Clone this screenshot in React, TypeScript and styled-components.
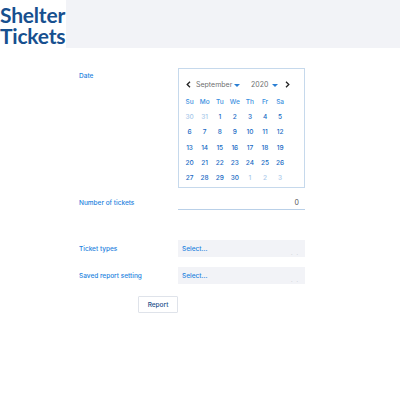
import React from 'react';
import styled, { createGlobalStyle } from 'styled-components';

const GlobalStyle = createGlobalStyle`
  body {
    margin: 0;
    background: #ffffff;
    font-family: 'Inter', 'Noto Sans', sans-serif;
  }
`;

const Page = styled.div`
  width: 400px;
  height: 400px;
  overflow: hidden;
`;

const Header = styled.header`
  display: flex;
  height: 48px;
`;

const Logo = styled.div`
  width: 66px;
  color: #17508f;
  font-family: 'Lato', sans-serif;
  font-weight: 700;
  font-size: 21px;
  line-height: 21px;
  letter-spacing: -0.2px;
  padding-top: 4px;
  white-space: nowrap;
`;

const LogoLine = styled.div`
  height: 21px;
`;

const HeaderBar = styled.div`
  flex: 1;
  background: #f2f3f7;
`;

const Form = styled.form`
  display: flex;
  flex-direction: column;
  padding: 20px 0 0 79px;
`;

const Row = styled.div<{ $gap?: number }>`
  display: grid;
  grid-template-columns: 99px 127px;
  align-items: start;
  margin-top: ${(p) => p.$gap || 0}px;
`;

const Label = styled.label`
  color: #2482de;
  font-size: 6.5px;
  font-weight: 500;
  padding-top: 4px;
`;

const CenterLabel = styled(Label)`
  padding-top: 0;
  align-self: center;
`;

const Calendar = styled.div`
  height: 120px;
  box-sizing: border-box;
  border: 1px solid #c6d9ec;
  padding: 8px 0 0 3px;
`;

const Nav = styled.div`
  display: flex;
  align-items: center;
  height: 14px;
  padding-left: 4px;
  font-size: 7px;
  color: #707070;
`;

const Chevron = styled.span<{ $gap?: number }>`
  display: inline-flex;
  align-items: center;
  margin-left: ${(p) => p.$gap || 0}px;
`;

const Month = styled.span<{ $w: number; $gap: number }>`
  display: inline-flex;
  align-items: center;
  justify-content: space-between;
  width: ${(p) => p.$w}px;
  margin-left: ${(p) => p.$gap}px;
`;

const Caret = styled.span`
  width: 0;
  height: 0;
  border-left: 3px solid transparent;
  border-right: 3px solid transparent;
  border-top: 3px solid #2a7fd4;
  margin-top: 3px;
`;

const Grid = styled.div`
  display: grid;
  grid-template-columns: repeat(7, 15.1px);
  grid-auto-rows: 15.3px;
  margin-top: 3px;
`;

const DayName = styled.div`
  display: flex;
  align-items: center;
  justify-content: center;
  font-size: 6.5px;
  color: #3a8fe0;
  font-weight: 500;
`;

const Day = styled.div<{ $muted?: boolean }>`
  display: flex;
  align-items: center;
  justify-content: center;
  font-size: 6.5px;
  font-weight: 500;
  color: ${(p) => (p.$muted ? '#a9c9ea' : '#176ac4')};
`;

const NumberInput = styled.div`
  height: 13px;
  border-bottom: 1px solid #b9d0e8;
  display: flex;
  align-items: center;
  justify-content: flex-end;
  padding-right: 6px;
  font-size: 7px;
  color: #555;
`;

const Select = styled.div`
  position: relative;
  height: 17px;
  background: #f2f3f7;
  display: flex;
  align-items: center;
  padding-left: 4px;
  font-size: 6.5px;
  color: #2482de;
  font-weight: 500;
`;

const Dots = styled.span`
  position: absolute;
  right: 3px;
  bottom: 1px;
  font-size: 5px;
  letter-spacing: 4px;
  color: #c8cbd2;
`;

const ButtonRow = styled.div`
  display: flex;
  margin-top: 12px;
  padding-left: 59px;
`;

const Button = styled.button`
  width: 40px;
  height: 17px;
  border: 1px solid #dfe3ea;
  background: #ffffff;
  border-radius: 1px;
  color: #1b4f8a;
  font-family: 'Inter', sans-serif;
  font-size: 6.5px;
  font-weight: 500;
  padding: 0;
`;

const dayNames = ['Su', 'Mo', 'Tu', 'We', 'Th', 'Fr', 'Sa'];

const days: { n: number; muted?: boolean }[] = [
  { n: 30, muted: true },
  { n: 31, muted: true },
  ...Array.from({ length: 30 }, (_, i) => ({ n: i + 1 })),
  { n: 1, muted: true },
  { n: 2, muted: true },
  { n: 3, muted: true },
];

export default function App() {
  return (
    <Page>
      <GlobalStyle />
      <Header>
        <Logo>
          <LogoLine>Shelter</LogoLine>
          <LogoLine>Tickets</LogoLine>
        </Logo>
        <HeaderBar />
      </Header>

      <Form>
        <Row>
          <Label>Date</Label>
          <Calendar>
            <Nav>
              <Chevron>
                <svg width="5" height="7" viewBox="0 0 5 7">
                  <path d="M4 0.8 L1.2 3.5 L4 6.2" stroke="#222" strokeWidth="1.3" fill="none" />
                </svg>
              </Chevron>
              <Month $w={44} $gap={5}>
                September <Caret />
              </Month>
              <Month $w={27} $gap={11}>
                2020 <Caret />
              </Month>
              <Chevron $gap={7}>
                <svg width="5" height="7" viewBox="0 0 5 7">
                  <path d="M1 0.8 L3.8 3.5 L1 6.2" stroke="#222" strokeWidth="1.3" fill="none" />
                </svg>
              </Chevron>
            </Nav>
            <Grid>
              {dayNames.map((d) => (
                <DayName key={d}>{d}</DayName>
              ))}
              {days.map((d, i) => (
                <Day key={i} $muted={d.muted}>
                  {d.n}
                </Day>
              ))}
            </Grid>
          </Calendar>
        </Row>

        <Row $gap={8}>
          <CenterLabel>Number of tickets</CenterLabel>
          <NumberInput>0</NumberInput>
        </Row>

        <Row $gap={30}>
          <CenterLabel>Ticket types</CenterLabel>
          <Select>
            Select...
            <Dots>..</Dots>
          </Select>
        </Row>

        <Row $gap={10}>
          <CenterLabel>Saved report setting</CenterLabel>
          <Select>
            Select...
            <Dots>..</Dots>
          </Select>
        </Row>

        <ButtonRow>
          <Button type="button">Report</Button>
        </ButtonRow>
      </Form>
    </Page>
  );
}
